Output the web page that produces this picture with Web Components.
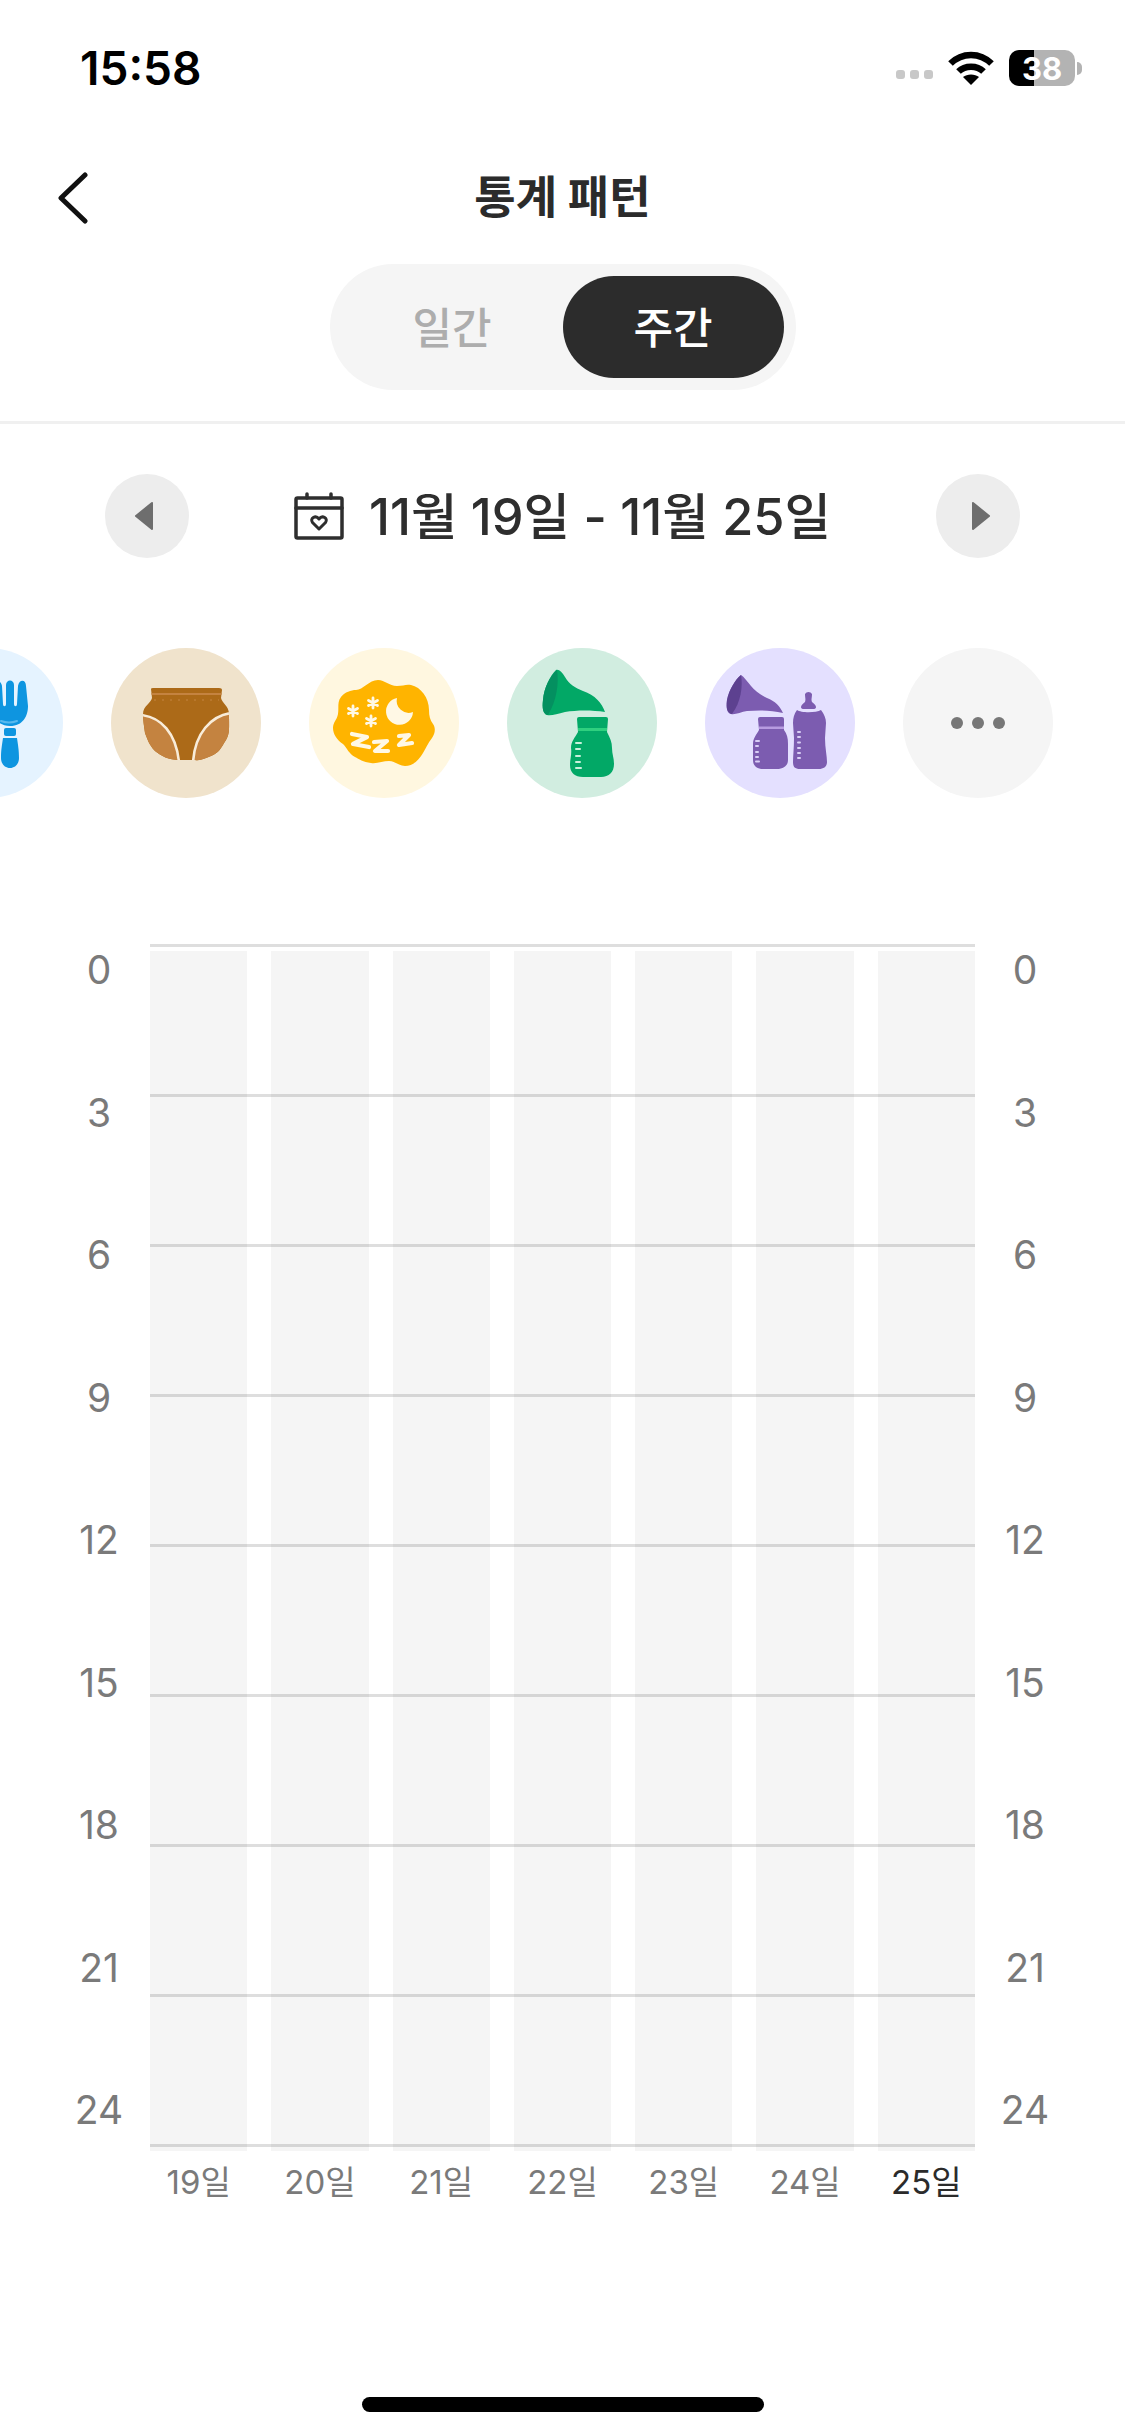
<!DOCTYPE html>
<html lang="ko">
<head>
<meta charset="utf-8">
<title>통계 패턴</title>
<style>
  html, body { margin: 0; background: #fff; }
  body { font-family: Inter, "Noto Sans CJK KR", sans-serif; }
  category-badge svg { display: block; width: 150px; height: 150px; }
</style>
</head>
<body>

<app-screen>
  <status-bar></status-bar>
  <nav-header>통계 패턴</nav-header>
  <period-toggle></period-toggle>
  <date-nav>11월 19일 - 11월 25일</date-nav>
  <category-row>
    <category-badge color="#e5f3ff">
      <svg viewBox="0 0 150 150">
        <path fill="#0e95e0" d="M97 78C84 78 79 68 79 58L80 38C80 31 88 31 89 38L90 56C90 59 93 59 93 56L93 37C93 31 101 31 101 37L101 56C101 59 104 59 104 56L105 38C106 31 113 31 113 38L115 58C115 68 110 78 97 78Z"/>
        <path fill="none" stroke="#58b9ee" stroke-width="2" stroke-linecap="round" d="M88 73Q96 76 104 73"/>
        <rect x="91" y="80" width="12" height="8" rx="2" fill="#0e95e0"/>
        <path fill="#0e95e0" d="M90 90H104C105 97 106 102 106 110C106 116 102 120 97 120C92 120 88 116 88 110C88 102 89 97 90 90Z"/>
      </svg>
    </category-badge>
    <category-badge color="#f0e3cc">
      <svg viewBox="0 0 150 150">
        <clipPath id="diaper-body"><path d="M40 41Q40 40 42 40L108 40Q111 40 111 42L110 50C111 55 118 58 118 66C118 80 119 85 115 92C110 100 108 105 100 108C94 110 90 113 84 112L68 112C58 112 50 108 44 103C38 97 36 90 34 85C33 78 32 72 32 66C32 58 40 55 41 50Z"/></clipPath>
        <g clip-path="url(#diaper-body)">
          <rect x="25" y="35" width="100" height="85" fill="#ac6a18"/>
          <rect x="36" y="45" width="80" height="2" fill="#c48340"/>
          <path stroke="#c48340" stroke-width="1.2" stroke-dasharray="2 6" d="M43 52H108"/>
          <path fill="#c48340" stroke="#f8ecd9" stroke-width="2.6" d="M30 67C50 69 65 85 68 114L50 120L20 105Z"/>
          <path fill="#c48340" stroke="#f8ecd9" stroke-width="2.6" d="M120 65C100 68 84 85 82 114L100 120L130 100Z"/>
        </g>
      </svg>
    </category-badge>
    <category-badge color="#fff7e0">
      <svg viewBox="0 0 150 150">
        <path fill="#ffb400" d="M69 32C76 32 80 38 88 38C94 38 97 36 102 37C112 39 120 50 120 62C120 68 121 72 124 76C127 80 126 86 123 90C119 95 117 100 114 105C110 112 104 118 96 118C90 118 86 113 80 113C74 113 68 116 62 115C54 114 50 111 46 109C40 106 38 100 34 96C28 92 24 86 24 80C24 74 28 72 29 66C30 60 28 54 32 49C36 44 42 42 47 42C54 42 60 32 69 32Z"/>
        <path fill="#fff8e5" d="M88 50A13.5 13.5 0 1 0 104 64A12 12 0 0 1 88 50Z"/>
        <g stroke="#fff8e5" stroke-width="2.8" stroke-linecap="round" fill="none">
          <path d="M44 58V68M39.500 60.500L48.500 65.500M48.500 60.500L39.500 65.500"/>
          <path d="M64 50V60M59.500 52.500L68.500 57.500M68.500 52.500L59.500 57.500"/>
          <path d="M62 68V78M57.500 70.500L66.500 75.500M66.500 70.500L57.500 75.500"/>
          <g stroke-width="4.200" stroke-linejoin="round">
            <path d="M43 86L58 89L44 96L60 99"/>
            <path d="M65 94L78 93L66 103L79 103"/>
            <path d="M90 88L100 87L90 97L103 95"/>
          </g>
        </g>
      </svg>
    </category-badge>
    <category-badge color="#d1ede0">
      <svg viewBox="0 0 150 150">
        <path fill="#02a866" d="M49 22C52 21 55 24 58 29C62 36 68 40 76 43C88 47 95 55 98 64C85 62 70 62 58 64C50 66 44 68 40 67C36 66 35 60 36 52C37 40 43 28 49 22Z"/>
        <path fill="#049060" d="M50 22C52 35 50 52 41 67C36 66 35 60 36 52C37 40 43 28 50 22Z"/>
        <path fill="#02a866" d="M72 69L99 69Q101 69 101 71L100 84C103 90 105 94 105 100C105 106 107 110 107 116C107 124 102 129 94 129L76 129C68 129 63 125 63 117C63 111 65 106 64 100C64 93 68 90 71 84L70 71Q70 69 72 69Z"/>
        <path fill="#2fd07f" d="M71 80L100 80V83L71 83Z"/>
        <g fill="#c8f0dc">
          <rect x="68" y="94" width="7" height="2" rx="1"/>
          <rect x="68" y="100" width="6" height="2" rx="1"/>
          <rect x="68" y="107" width="6" height="2" rx="1"/>
          <rect x="68" y="113" width="6" height="2" rx="1"/>
          <rect x="68" y="119" width="7" height="2" rx="1"/>
        </g>
      </svg>
    </category-badge>
    <category-badge color="#e4e0ff">
      <svg viewBox="0 0 150 150">
        <path fill="#7c5cb0" d="M36 27C39 29 42 33 46 38C50 43 56 47 62 50C70 53 75 58 78 65C66 62 54 62 42 63C36 64 30 67 26 66C22 65 21 60 22 52C24 42 30 32 36 27Z"/>
        <path fill="#5d4190" d="M36 27C38 38 36 54 27 66C22 65 21 60 22 52C24 42 30 32 36 27Z"/>
        <path fill="#7c5cb0" d="M55 69H77Q79 69 79 71L79 82C82 86 83 90 83 96V112C83 118 78 121 72 121H58C52 121 48 118 48 112V96C48 90 52 86 54 82L53 71Q53 69 55 69Z"/>
        <path fill="#b79be0" d="M54 78.500H79V81H54Z"/>
        <path fill="#7c5cb0" d="M100 46A4 4 0 0 1 107 46C107 50 106 51 107 54C109 56 111 57 111 59Q111 61 108 61H99Q96 61 96 59C96 57 98 56 100 54C101 51 100 50 100 46Z"/>
        <path fill="#7c5cb0" d="M92 62C96 65 111 65 116 62C119 66 121 70 121 75L120 90C120 100 122 108 122 114C122 119 118 121 114 121H95C90 121 88 119 88 114C88 108 89 100 89 90L88 75C88 70 89 66 92 62Z"/>
        <g fill="#d9cff5">
          <rect x="50" y="92" width="5" height="2" rx="1"/>
          <rect x="50" y="97" width="4" height="2" rx="1"/>
          <rect x="50" y="103" width="4" height="2" rx="1"/>
          <rect x="50" y="108" width="4" height="2" rx="1"/>
          <rect x="50" y="112.500" width="5" height="2" rx="1"/>
          <rect x="92" y="83" width="4" height="2" rx="1"/>
          <rect x="92" y="88" width="4" height="2" rx="1"/>
          <rect x="92" y="93.500" width="4" height="2" rx="1"/>
          <rect x="92" y="99" width="4" height="2" rx="1"/>
          <rect x="92" y="104" width="4" height="2" rx="1"/>
          <rect x="92" y="109" width="4" height="2" rx="1"/>
        </g>
      </svg>
    </category-badge>
    <category-badge color="#f5f5f5">
      <svg viewBox="0 0 150 150">
        <g fill="#777"><circle cx="54" cy="75" r="6"/><circle cx="75" cy="75" r="6"/><circle cx="96" cy="75" r="6"/></g>
      </svg>
    </category-badge>
  </category-row>
  <pattern-chart></pattern-chart>
  <home-indicator></home-indicator>
</app-screen>

<script>
const FONT = 'Inter, "Noto Sans CJK KR", sans-serif'

class AppScreen extends HTMLElement {
  connectedCallback() {
    this.attachShadow({ mode: 'open' }).innerHTML = `
      <style>
        :host { display: flex; flex-direction: column; width: 1125px; height: 2436px; overflow: hidden; background: #fff; font-family: ${FONT}; }
      </style>
      <slot></slot>`
  }
}

class StatusBar extends HTMLElement {
  connectedCallback() {
    this.attachShadow({ mode: 'open' }).innerHTML = `
      <style>
        :host { display: flex; align-items: center; justify-content: space-between; height: 136px; padding: 0 43px 0 80px; }
        .time { font-size: 46px; font-weight: 600; color: #000; }
        .right { display: flex; align-items: center; }
        .dots { display: flex; gap: 5px; margin: 12px 15px 0 0; }
        .dots i { width: 9px; height: 9px; border-radius: 3px; background: #c8c8c8; }
        .wifi { display: block; width: 46px; height: 34px; margin-right: 15px; }
        .battery { position: relative; display: flex; align-items: center; justify-content: center; width: 66px; height: 36px; border-radius: 10px; overflow: hidden; color: #fff; font-size: 31px; font-weight: 700;
          background: linear-gradient(90deg, #000 25px, #b3b3b3 25px); }
        .tip { width: 5px; height: 13px; margin-left: 2px; background: #b3b3b3; border-radius: 0 5px 5px 0; }
      </style>
      <span class="time">15:58</span>
      <div class="right">
        <div class="dots"><i></i><i></i><i></i></div>
        <svg class="wifi" viewBox="0 0 46 34" fill="none" stroke="#000" stroke-width="6.500">
          <path d="M2.500 12.500C14 1 32 1 43.500 12.500"/>
          <path d="M10.500 20.500C17 14 29 14 35.500 20.500"/>
          <path d="M23 34L15 26C19 22.500 27 22.500 31 26Z" fill="#000" stroke="none"/>
        </svg>
        <div class="battery">38</div>
        <div class="tip"></div>
      </div>`
  }
}

class NavHeader extends HTMLElement {
  connectedCallback() {
    this.attachShadow({ mode: 'open' }).innerHTML = `
      <style>
        :host { display: grid; grid-template-columns: 1fr auto 1fr; align-items: center; height: 124px; padding-left: 56px; }
        svg { display: block; width: 34px; height: 52px; }
        .title { font-size: 45px; font-weight: 700; line-height: 60px; margin: 0 0 0 -56px; color: #2b2b2b; }
      </style>
      <svg viewBox="0 0 34 52" fill="none" stroke="#111" stroke-width="5" stroke-linecap="round" stroke-linejoin="round"><path d="M29 3L5 26L29 49"/></svg>
      <span class="title"><slot></slot></span>`
  }
}

class PeriodToggle extends HTMLElement {
  connectedCallback() {
    this.attachShadow({ mode: 'open' }).innerHTML = `
      <style>
        :host { display: block; padding: 4px 0 31px; border-bottom: 3px solid #f0f0f0; }
        .track { display: flex; width: 466px; height: 126px; box-sizing: border-box; padding: 12px; margin: 0 auto; border-radius: 63px; background: #f5f5f5; }
        .item { flex: 1; display: flex; align-items: center; justify-content: center; box-sizing: border-box; padding-bottom: 4px; border-radius: 51px; font-size: 43px; font-weight: 500; color: #adadad; }
        .item.active { background: #2c2c2c; color: #fff; }
      </style>
      <div class="track">
        <div class="item">일간</div>
        <div class="item active">주간</div>
      </div>`
  }
}

class DateNav extends HTMLElement {
  connectedCallback() {
    this.attachShadow({ mode: 'open' }).innerHTML = `
      <style>
        :host { display: flex; align-items: center; justify-content: space-between; margin: 50px 105px 0; }
        .arrow { display: flex; align-items: center; justify-content: center; width: 84px; height: 84px; border-radius: 50%; background: #ededed; }
        .arrow svg { display: block; width: 20px; height: 30px; }
        .arrow.prev svg { margin-right: 6px; }
        .arrow.next svg { margin-left: 6px; }
        .label { display: flex; align-items: center; gap: 25px; font-size: 50.500px; font-weight: 500; color: #2e2e2e; white-space: nowrap; }
        .label span { padding-bottom: 6px; }
        .cal { display: block; width: 50px; height: 48px; }
      </style>
      <div class="arrow prev"><svg viewBox="0 0 20 30"><path fill="#6e6e6e" stroke="#6e6e6e" stroke-width="2" stroke-linejoin="round" d="M18 2V28L2 15Z"/></svg></div>
      <div class="label">
        <svg class="cal" viewBox="0 0 50 48" fill="none" stroke="#2e2e2e" stroke-width="3.500" stroke-linecap="round" stroke-linejoin="round">
          <rect x="2" y="6" width="46" height="40" rx="1.500"/>
          <path d="M2 16H48M13 2V6M37 2V6"/>
          <path stroke-width="3" d="M25 37L18.500 30.500C15.500 26.500 21.500 22.500 25 27C28.500 22.500 34.500 26.500 31.500 30.500Z"/>
        </svg>
        <span><slot></slot></span>
      </div>
      <div class="arrow next"><svg viewBox="0 0 20 30"><path fill="#6e6e6e" stroke="#6e6e6e" stroke-width="2" stroke-linejoin="round" d="M2 2V28L18 15Z"/></svg></div>`
  }
}

class CategoryRow extends HTMLElement {
  connectedCallback() {
    this.attachShadow({ mode: 'open' }).innerHTML = `
      <style>
        :host { display: block; margin-top: 90px; overflow: hidden; }
        .scroller { display: flex; gap: 48px; margin-left: -87px; width: max-content; }
      </style>
      <div class="scroller"><slot></slot></div>`
  }
}

class CategoryBadge extends HTMLElement {
  connectedCallback() {
    this.attachShadow({ mode: 'open' }).innerHTML = `
      <style>
        :host { display: block; width: 150px; height: 150px; border-radius: 50%; background: ${this.getAttribute('color')}; }
      </style>
      <slot></slot>`
  }
}

class PatternChart extends HTMLElement {
  connectedCallback() {
    const hours = [0, 3, 6, 9, 12, 15, 18, 21, 24]
    const days = [19, 20, 21, 22, 23, 24, 25]
    const axis = hours.map(h => `<span>${h}</span>`).join('')
    this.attachShadow({ mode: 'open' }).innerHTML = `
      <style>
        :host { display: grid; grid-template-columns: 150px 825px 150px; margin-top: 146px; }
        .axis { display: flex; flex-direction: column; justify-content: space-between; align-items: center; height: 1190px; margin-top: 1px; font-size: 39px; line-height: 50px; color: #7a7a7a; }
        .axis.left { padding-left: 48px; }
        .axis.right { padding-right: 50px; }
        .plot { position: relative; height: 1207px; }
        .bars { display: flex; gap: 24px; padding-top: 7px; height: 1200px; }
        .bars i { flex: 1; background: #f5f5f5; }
        .lines { position: absolute; left: 0; right: 0; top: 0; height: 1203px; display: flex; flex-direction: column; justify-content: space-between; }
        .lines i { height: 3px; background: rgba(0, 0, 0, .13); }
        .days { grid-column: 2; display: flex; gap: 24px; margin-top: 11px; font-size: 33px; line-height: 40px; color: #7a7a7a; }
        .days span { flex: 1; text-align: center; white-space: nowrap; }
        .days .today { color: #2b2b2b; }
      </style>
      <div class="axis left">${axis}</div>
      <div class="plot">
        <div class="bars">${days.map(() => '<i></i>').join('')}</div>
        <div class="lines">${hours.map(() => '<i></i>').join('')}</div>
      </div>
      <div class="axis right">${axis}</div>
      <div class="days">${days.map(d => `<span class="${d === 25 ? 'today' : ''}">${d}일</span>`).join('')}</div>`
  }
}

class HomeIndicator extends HTMLElement {
  connectedCallback() {
    this.attachShadow({ mode: 'open' }).innerHTML = `
      <style>
        :host { display: block; width: 402px; height: 15px; margin: auto auto 24px; border-radius: 8px; background: #000; }
      </style>`
  }
}

customElements.define('app-screen', AppScreen)
customElements.define('status-bar', StatusBar)
customElements.define('nav-header', NavHeader)
customElements.define('period-toggle', PeriodToggle)
customElements.define('date-nav', DateNav)
customElements.define('category-row', CategoryRow)
customElements.define('category-badge', CategoryBadge)
customElements.define('pattern-chart', PatternChart)
customElements.define('home-indicator', HomeIndicator)
</script>
</body>
</html>
